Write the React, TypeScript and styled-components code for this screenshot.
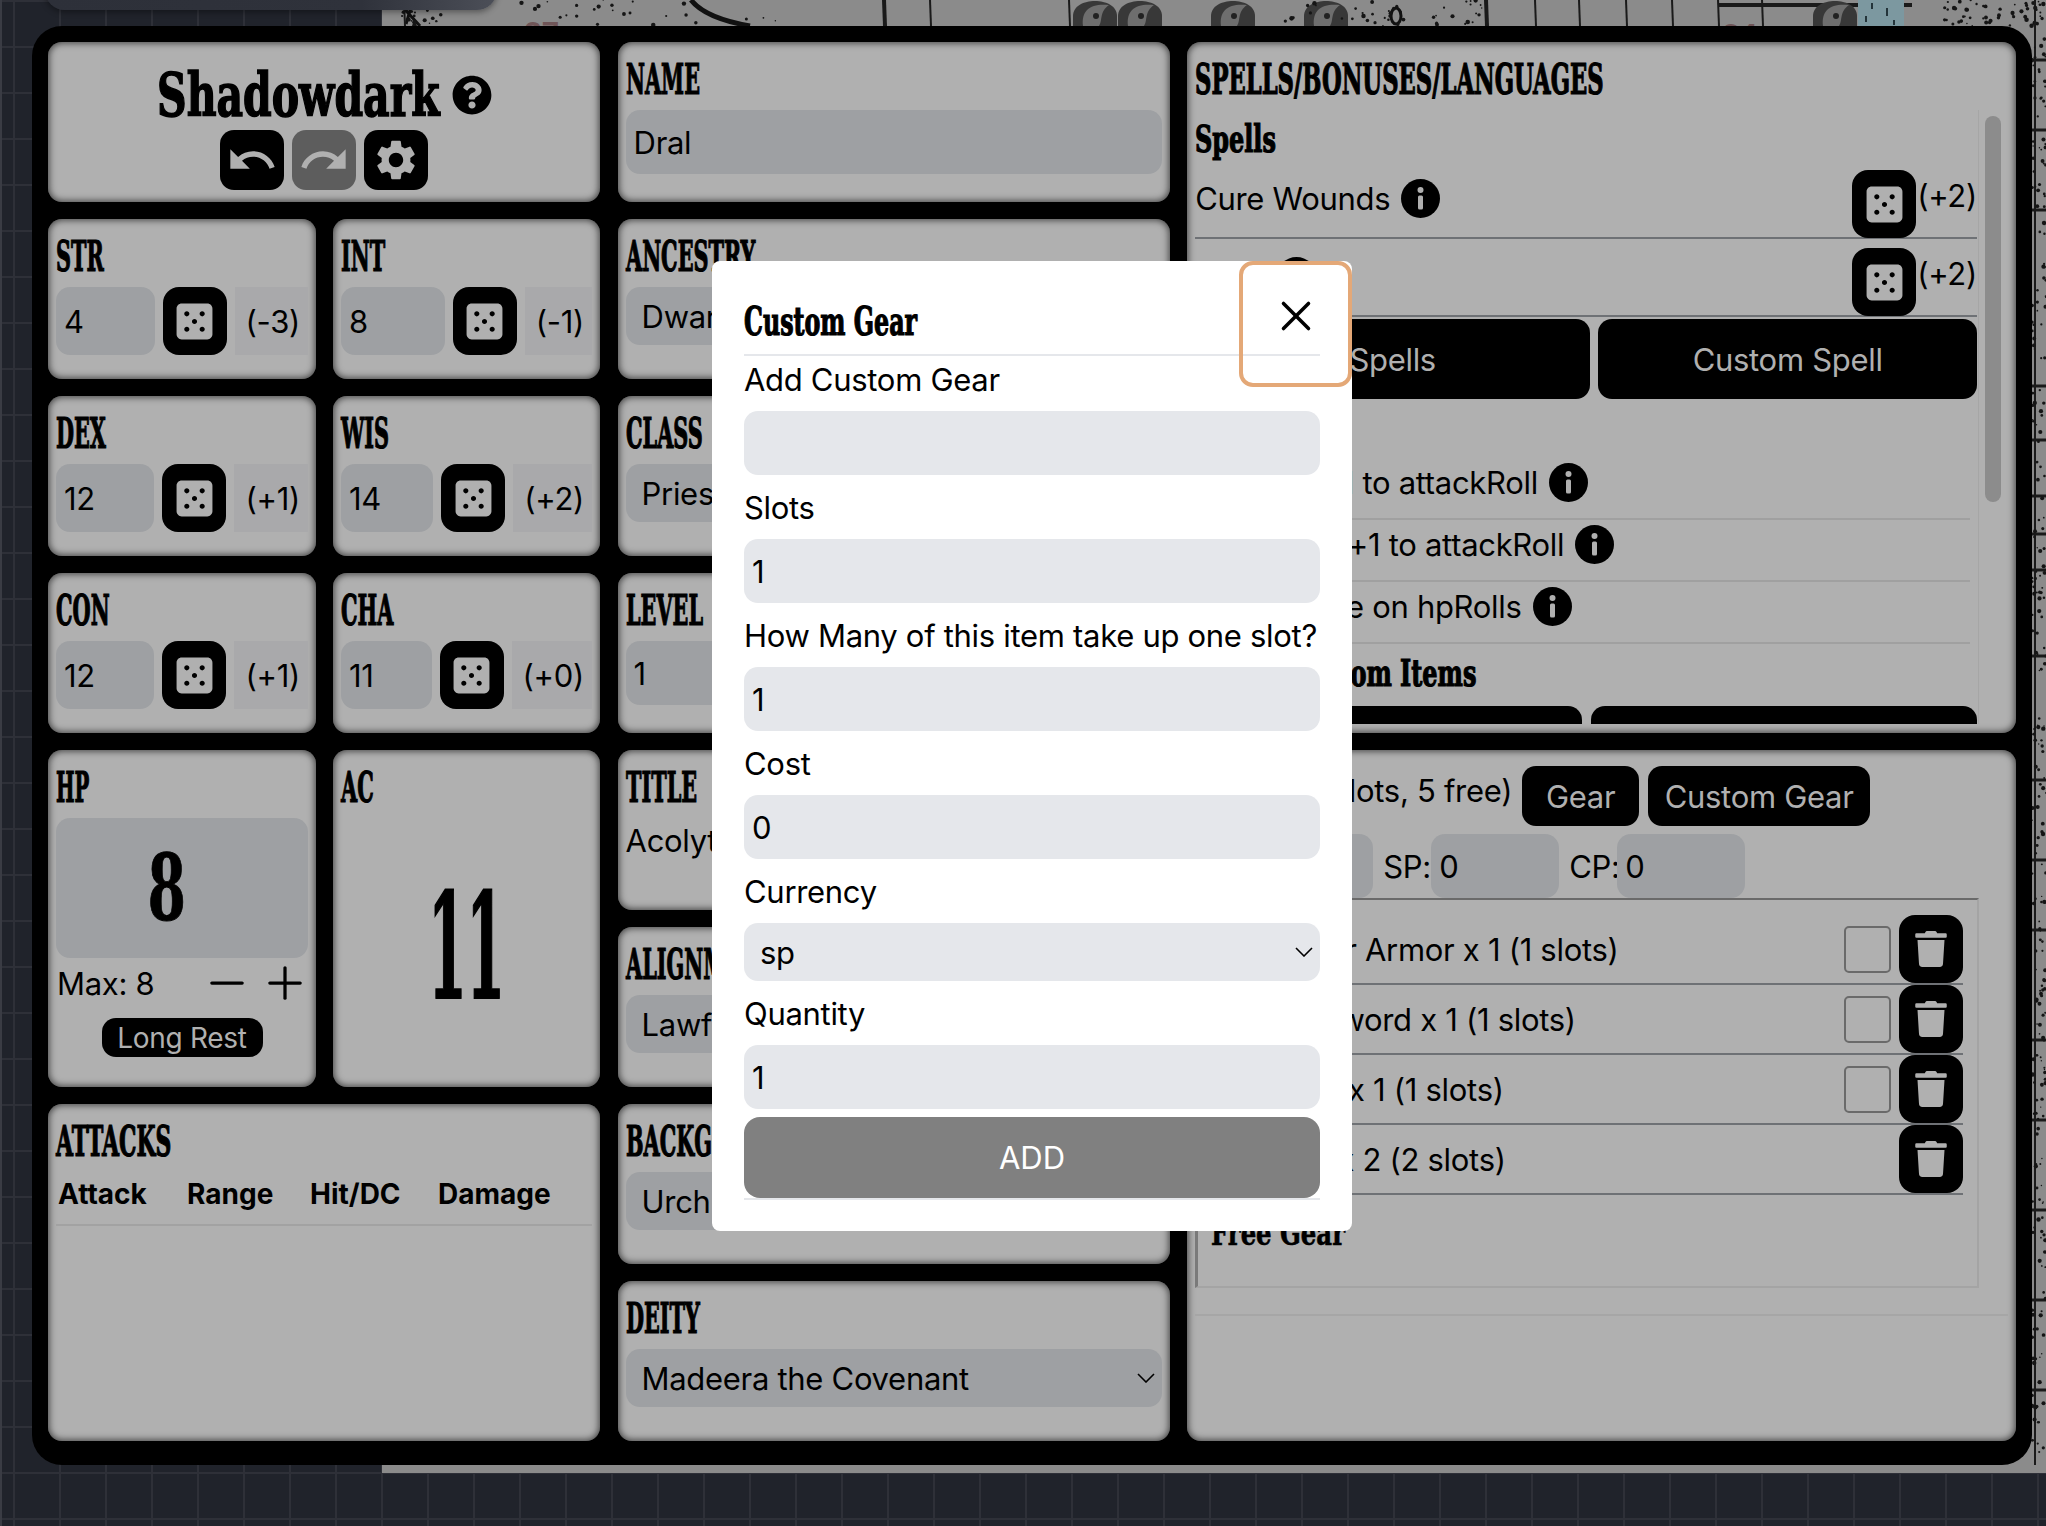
import React from 'react';
import styled, {createGlobalStyle} from 'styled-components';
import {FaDiceFive, FaQuestionCircle, FaTrash} from 'react-icons/fa';
import {MdRedo, MdSettings, MdUndo} from 'react-icons/md';
import {Minus, Plus, X} from 'lucide-react';

const GlobalStyle = createGlobalStyle`
  html, body {
    margin: 0;
    padding: 0;
    background: #20232b;
  }
  * {
    box-sizing: border-box;
  }
  body {
    font-family: Inter, "Liberation Sans", sans-serif;
    font-size: 31px;
    letter-spacing: -0.3px;
    color: #000;
  }
`;

const BLACK = `"DejaVu Serif Condensed", "DejaVu Serif", "Liberation Serif", serif`;

const Page = styled.div`
  position: relative;
  width: 2046px;
  height: 1526px;
  overflow: hidden;
  padding: 26px 14px 0 32px;
  background-color: #20232b;
  background-image:
    linear-gradient(#2e3038 2px, transparent 2px),
    linear-gradient(90deg, #2e3038 2px, transparent 2px);
  background-size: 46px 46px;
  background-position: 13px 0;
  box-shadow: inset 2px 0 0 #3a3c44;
`;

const MapLayer = styled.svg`
  position: absolute;
  left: 382px;
  top: 0;
`;

const TopBar = styled.div`
  position: absolute;
  left: 45px;
  top: -40px;
  width: 452px;
  height: 50px;
  border-radius: 20px;
  background: linear-gradient(90deg, #2d3039 0%, #2f323b 70%, #4c4f58 100%);
  box-shadow: 0 2px 6px rgba(0, 0, 0, 0.4);
`;

const Sheet = styled.div`
  position: relative;
  width: 2000px;
  height: 1439px;
  padding: 16px 16px 24px;
  display: grid;
  grid-template-columns: 2fr 2fr 3fr;
  column-gap: 17px;
  background: #000;
  border-radius: 30px;
`;

const LeftColumn = styled.div`
  display: grid;
  grid-template-columns: 268px 267px;
  grid-template-rows: 160px 160px 160px 160px 337px 337px;
  gap: 17px;
`;

const MiddleColumn = styled.div`
  display: grid;
  grid-template-rows: repeat(8, 160px);
  gap: 17px;
`;

const RightColumn = styled.div`
  display: grid;
  grid-template-rows: 691px 691px;
  gap: 17px;
`;

const Card = styled.section<{$wide?: boolean}>`
  grid-column: ${p => (p.$wide ? '1 / span 2' : 'auto')};
  min-width: 0;
  padding: 8px;
  overflow: hidden;
  background: #b0b0b0;
  border-radius: 14px;
  box-shadow: inset 0 0 7px 1px rgba(0, 0, 0, 0.65);
`;

// no blackletter face on this machine: squeezed heavy serif stands in
const CardTitle = styled.h2<{$squeeze?: number}>`
  margin: 0;
  height: 60px;
  font: 700 42px/60px ${BLACK};
  letter-spacing: 0;
  white-space: nowrap;
  -webkit-text-stroke: 1.2px #000;
  transform: scaleX(${p => p.$squeeze ?? 0.55});
  transform-origin: left center;
`;

const SubHeading = styled.h3<{$height?: number; $indent?: number}>`
  margin: 0;
  height: ${p => p.$height ?? 58}px;
  padding-left: ${p => p.$indent ?? 0}px;
  font: 700 38px/58px ${BLACK};
  letter-spacing: 0;
  white-space: nowrap;
  -webkit-text-stroke: 1.2px #000;
  transform: scaleX(0.7);
  transform-origin: left center;
`;

const HeaderCard = styled(Card)`
  display: flex;
  flex-direction: column;
  align-items: center;
  padding-top: 20px;
`;

const BrandRow = styled.div`
  display: flex;
  align-items: center;
  justify-content: center;
  gap: 11px;
  height: 66px;
`;

const Brand = styled.h1`
  margin: 0;
  width: 284px;
  font: 700 60px/68px ${BLACK};
  letter-spacing: 0;
  white-space: nowrap;
  -webkit-text-stroke: 1.5px #000;
  transform: scaleX(0.76);
  transform-origin: left center;
`;

const ToolRow = styled.div`
  display: flex;
  gap: 8px;
  margin-top: 2px;
`;

const ToolButton = styled.button<{$off?: boolean}>`
  display: flex;
  align-items: center;
  justify-content: center;
  width: 64px;
  height: 60px;
  padding: 0;
  border: none;
  border-radius: 14px;
  color: #b0b0b0;
  background: ${p => (p.$off ? '#5d5d5d' : '#000')};
`;

const StatRow = styled.div`
  display: flex;
  gap: 8px;
  height: 68px;
`;

const Field = styled.input`
  display: block;
  width: 100%;
  min-width: 0;
  height: 64px;
  padding: 0 8px;
  border: none;
  outline: none;
  border-radius: 14px;
  font: inherit;
  letter-spacing: inherit;
  color: #000;
  background: #9ea0a3;
`;

const StatField = styled(Field)`
  flex: 1;
  height: 68px;
`;

const DieButton = styled.button`
  flex: none;
  display: flex;
  align-items: center;
  justify-content: center;
  width: 64px;
  height: 68px;
  padding: 0;
  border: none;
  border-radius: 16px;
  color: #b0b0b0;
  background: #000;
`;

const Modifier = styled.span`
  display: flex;
  align-items: center;
  padding: 0 8px 0 11px;
  background: #a9a9ab;
`;

const SheetSelect = styled.select`
  display: block;
  width: 100%;
  height: 58px;
  padding: 0 16px;
  border: none;
  outline: none;
  appearance: none;
  border-radius: 14px;
  font: inherit;
  letter-spacing: inherit;
  color: #000;
  background: #9ea0a3 url("data:image/svg+xml,%3Csvg xmlns='http://www.w3.org/2000/svg' width='18' height='10' fill='none' stroke='%23000' stroke-width='1.6'%3E%3Cpath d='M1 1l8 8 8-8'/%3E%3C/svg%3E") no-repeat right 7px center;
`;

const PlainValue = styled.div`
  height: 46px;
  line-height: 46px;
`;

const HpValue = styled.div`
  display: flex;
  align-items: center;
  justify-content: center;
  height: 140px;
  padding-right: 30px;
  border-radius: 14px;
  background: #9ea0a3;
`;

const HpDigit = styled.span`
  font: 700 92px/1 ${BLACK};
  -webkit-text-stroke: 1px #000;
  transform: scaleX(0.66);
`;

const HpControls = styled.div`
  display: flex;
  align-items: center;
  gap: 6px;
  height: 50px;
  margin-right: -3px;
  padding-left: 1px;
`;

const HpMax = styled.span`
  flex: 1;
`;

const HpStep = styled.button`
  display: flex;
  padding: 0;
  border: none;
  color: #000;
  background: none;
`;

const LongRest = styled.button`
  display: block;
  width: 161px;
  height: 39px;
  margin: 10px auto 0;
  padding: 0;
  border: none;
  border-radius: 14px;
  font: inherit;
  font-size: 28px;
  letter-spacing: -0.3px;
  color: #b0b0b0;
  background: #000;
`;

const AcValue = styled.div`
  display: flex;
  align-items: center;
  justify-content: center;
  height: 258px;
  font: 700 146px/1 ${BLACK};
  -webkit-text-stroke: 2px #000;
  transform: scaleX(0.42);
`;

const AttackHead = styled.div`
  display: grid;
  grid-template-columns: 129px 123px 128px auto;
  height: 54px;
  padding: 4px 2px 0;
  border-bottom: 2px solid #a2a2a2;
  font-size: 28px;
  font-weight: 700;
  letter-spacing: 0;
  line-height: 36px;
`;

const ScrollArea = styled.div`
  position: relative;
  height: 614px;
  padding-right: 31px;
  overflow: hidden;
`;

const ScrollThumb = styled.span`
  position: absolute;
  top: 6px;
  right: 7px;
  width: 16px;
  height: 386px;
  border-radius: 8px;
  background: #8c8c8c;
`;

const ScrollTrack = styled.span`
  position: absolute;
  top: 0;
  bottom: 0;
  right: 29px;
  width: 1px;
  background: #a6a6a6;
`;

const SpellRow = styled.div<{$tail?: number}>`
  display: flex;
  align-items: flex-start;
  height: 69px;
  margin-bottom: ${p => p.$tail ?? 9}px;
  border-bottom: 2px solid #6e7175;
`;

const SpellName = styled.span`
  display: flex;
  align-items: center;
  gap: 11px;
  flex: 1;
  height: 57px;
`;

const SpellBonus = styled.span`
  margin-left: 1px;
  line-height: 52px;
`;

const ActionPair = styled.div<{$cols?: string; $gap?: number}>`
  display: grid;
  grid-template-columns: ${p => p.$cols ?? '1fr 1fr'};
  gap: ${p => p.$gap ?? 8}px;
`;

const BlackButton = styled.button<{$w?: number; $h?: number}>`
  width: ${p => (p.$w ? `${p.$w}px` : 'auto')};
  height: ${p => p.$h ?? 80}px;
  padding: 0 16px;
  border: none;
  border-radius: 14px;
  font: inherit;
  letter-spacing: inherit;
  color: #b0b0b0;
  background: #000;
`;

const BonusRow = styled.div<{$indent: number}>`
  display: flex;
  align-items: center;
  gap: 11px;
  height: 62px;
  margin-right: 7px;
  padding: 0 0 12px ${p => p.$indent}px;
  border-bottom: 2px solid #a0a0a0;
`;

const GearBar = styled.div`
  display: flex;
  align-items: center;
  gap: 9px;
  height: 60px;
  margin-top: 8px;
`;

const GearLoad = styled.span`
  flex: none;
  display: flex;
  justify-content: flex-end;
  align-self: flex-start;
  width: 317px;
  margin-right: 1px;
  white-space: nowrap;
  line-height: 50px;
`;

const CoinRow = styled.div`
  display: flex;
  align-items: center;
  gap: 10px;
  height: 64px;
  margin-top: 8px;
  padding-left: 2px;
`;

const Coin = styled.label`
  display: flex;
  align-items: center;
`;

const CoinLabel = styled.span`
  width: 48px;
`;

const CoinField = styled(Field)`
  width: 128px;
`;

const GearBox = styled.div`
  height: 418px;
  border-bottom: 2px solid #a6a6a6;
`;

const GearList = styled.div`
  height: 390px;
  margin-right: 29px;
  padding: 15px 14px 0 6px;
  border-style: solid;
  border-width: 2px 2px 2px 3px;
  border-color: #6a6a6a #a4a4a4 #a4a4a4 #7a7a7a;
`;

const GearRow = styled.div`
  display: flex;
  align-items: center;
  height: 70px;
  border-bottom: 2px solid #6e7175;
`;

const GearName = styled.span<{$indent: number}>`
  flex: 1;
  padding-left: ${p => p.$indent}px;
  white-space: nowrap;
`;

const Tick = styled.span`
  width: 47px;
  height: 47px;
  margin-right: 8px;
  border: 2px solid #6a6a6a;
  border-radius: 5px;
`;

const TrashButton = styled.button`
  display: flex;
  align-items: center;
  justify-content: center;
  width: 64px;
  height: 68px;
  padding: 0;
  border: none;
  border-radius: 16px;
  color: #b0b0b0;
  background: #000;
`;

const FreeGear = styled.h3`
  margin: 17px 0 0 7px;
  font: 700 33px/44px ${BLACK};
  letter-spacing: 0;
  -webkit-text-stroke: 0.6px #000;
  transform: scaleX(0.82);
  transform-origin: left center;
`;

const Modal = styled.div`
  position: absolute;
  left: 712px;
  top: 261px;
  width: 640px;
  height: 970px;
  padding: 0 32px;
  border-radius: 8px;
  background: #fff;
`;

const ModalHead = styled.div`
  display: flex;
  align-items: flex-end;
  height: 95px;
  padding-bottom: 8px;
  border-bottom: 2px solid #e5e7eb;
`;

const ModalTitle = styled.h2`
  margin: 0;
  font: 700 40px/50px ${BLACK};
  letter-spacing: 0;
  white-space: nowrap;
  -webkit-text-stroke: 1.2px #000;
  transform: scaleX(0.66);
  transform-origin: left center;
`;

const CloseButton = styled.button`
  position: absolute;
  top: 0;
  right: 0;
  display: flex;
  justify-content: center;
  width: 113px;
  height: 126px;
  padding: 26px 0 0;
  border: 4px solid #e4a877;
  border-radius: 14px;
  color: #000;
  background: none;
`;

const ModalLabel = styled.label<{$first?: boolean}>`
  display: flex;
  align-items: center;
  height: ${p => (p.$first ? 55 : 64)}px;
  padding-bottom: ${p => (p.$first ? 8 : 0)}px;
`;

const ModalField = styled(Field)`
  background: #e5e7eb;
`;

const ModalSelect = styled(SheetSelect)`
  background-color: #e5e7eb;
`;

const AddButton = styled.button`
  display: block;
  width: 100%;
  height: 81px;
  margin-top: 8px;
  border: none;
  border-radius: 16px;
  font: inherit;
  letter-spacing: 0;
  color: #fff;
  background: #808080;
`;

const ModalRule = styled.div`
  height: 2px;
  background: #e5e7eb;
`;

const stats = [
  {name: 'STR', value: 4, mod: '(-3)'},
  {name: 'INT', value: 8, mod: '(-1)'},
  {name: 'DEX', value: 12, mod: '(+1)'},
  {name: 'WIS', value: 14, mod: '(+2)'},
  {name: 'CON', value: 12, mod: '(+1)'},
  {name: 'CHA', value: 11, mod: '(+0)'},
];

const gear = [
  {name: 'Leather Armor x 1 (1 slots)', tick: true, indent: 43},
  {name: 'Longsword x 1 (1 slots)', tick: true, indent: 47},
  {name: 'Shield x 1 (1 slots)', tick: true, indent: 47},
  {name: 'Torch x 2 (2 slots)', tick: false, indent: 43},
];

const bonuses = [
  {name: 'Stout: +1 to attackRoll', indent: 34},
  {name: 'Farsight: +1 to attackRoll', indent: 20},
  {name: 'Advantage on hpRolls', indent: 13},
];

const InfoIcon = () => (
  <svg width="39" height="39" viewBox="0 0 39 39">
    <circle cx="19.5" cy="19.5" r="19.5" fill="#000" />
    <circle cx="19.5" cy="11" r="3" fill="#b0b0b0" />
    <rect x="17" y="16.5" width="5" height="14" rx="1.5" fill="#b0b0b0" />
  </svg>
);

// map that sits behind the sheet, only its edges show
const rand = (() => {
  let seed = 7;
  return () => {
    seed = (seed * 16807) % 2147483647;
    return seed / 2147483647;
  };
})();

const topSpecks = Array.from({length: 150}, () => {
  const zones = [[20, 60], [130, 420], [900, 1110], [1560, 1664]];
  const zone = zones[Math.floor(rand() * zones.length)];
  return {x: zone[0] + rand() * (zone[1] - zone[0]), y: rand() * 26, r: 0.7 + rand() * 1.6};
});

const sideSpecks = Array.from({length: 260}, () => ({
  x: 1650 + rand() * 14,
  y: rand() * 1465,
  r: 0.7 + rand() * 1.5,
}));

const statues = [713, 758, 851, 944, 1453];
const posts = [22, 502, 548, 687, 1104, 1153, 1197, 1244, 1290, 1336, 1380];
const sideLines = [60, 130, 210, 386, 440, 496, 534, 570, 656, 780, 860, 930, 1040, 1120, 1210, 1300, 1390];

const DungeonMap = () => (
  <MapLayer width="1664" height="1473" viewBox="0 0 1664 1473">
    <rect width="1664" height="1473" fill="#8b8b8b" />
    <path d="M16 2 L38 26 M30 4 L24 24" stroke="#111" strokeWidth="3" fill="none" />
    <path d="M309 0 C320 14 345 22 368 26" stroke="#111" strokeWidth="5" fill="none" />
    {posts.map(x => (
      <path key={x} d={`M${x} 0 L${x + 1} 26`} stroke="#1a1a1a" strokeWidth={x === 1104 || x === 502 ? 4 : 2} />
    ))}
    <path d="M1336 5 H1530" stroke="#1a1a1a" strokeWidth="4" />
    <rect x="1476" y="0" width="46" height="26" fill="#7c98a0" />
    <path d="M1490 3 v6 M1505 8 v8 M1484 16 v6 M1512 20 v5" stroke="#24343a" strokeWidth="2" />
    {statues.map(x => (
      <g key={x}>
        <path d={`M${x - 22} 26 V16 C${x - 22} -4 ${x + 22} -4 ${x + 22} 16 V26 Z`} fill="#383838" />
        <path d={`M${x - 12} 26 C${x - 14} 10 ${x - 4} 3 ${x + 14} 5 C${x + 4} 12 ${x + 8} 20 ${x + 4} 26 Z`} fill="#6e6e6e" />
        <circle cx={x + 1} cy={16} r={3} fill="#222" />
      </g>
    ))}
    <ellipse cx="1014" cy="16" rx="5" ry="8" fill="none" stroke="#111" strokeWidth="3" />
    <text x="142" y="44" fontFamily="Liberation Sans" fontWeight="700" fontSize="32" fill="#6f5557">27</text>
    <text x="1340" y="46" fontFamily="Liberation Sans" fontWeight="700" fontSize="32" fill="#6f5557">24</text>
    {topSpecks.map((s, i) => (
      <circle key={i} cx={s.x} cy={s.y} r={s.r} fill="#151515" />
    ))}
    <path d="M1653 0 V1465" stroke="#1a1a1a" strokeWidth="2" />
    {sideLines.map(y => (
      <path key={y} d={`M1650 ${y} H1664`} stroke="#1a1a1a" strokeWidth="3" />
    ))}
    {sideSpecks.map((s, i) => (
      <circle key={i} cx={s.x} cy={s.y} r={s.r} fill="#151515" />
    ))}
  </MapLayer>
);

const App = () => {
  return (
    <Page>
      <GlobalStyle />
      <DungeonMap />
      <TopBar />
      <Sheet>
        <LeftColumn>
          <HeaderCard $wide>
            <BrandRow>
              <Brand>Shadowdark</Brand>
              <FaQuestionCircle size={40} />
            </BrandRow>
            <ToolRow>
              <ToolButton><MdUndo size={52} /></ToolButton>
              <ToolButton $off><MdRedo size={52} /></ToolButton>
              <ToolButton><MdSettings size={48} /></ToolButton>
            </ToolRow>
          </HeaderCard>

          {stats.map(s => (
            <Card key={s.name}>
              <CardTitle>{s.name}</CardTitle>
              <StatRow>
                <StatField readOnly value={s.value} />
                <DieButton><FaDiceFive size={41} /></DieButton>
                <Modifier>{s.mod}</Modifier>
              </StatRow>
            </Card>
          ))}

          <Card>
            <CardTitle $squeeze={0.52}>HP</CardTitle>
            <HpValue><HpDigit>8</HpDigit></HpValue>
            <HpControls>
              <HpMax>Max: 8</HpMax>
              <HpStep><Minus size={52} strokeWidth={1.5} /></HpStep>
              <HpStep><Plus size={52} strokeWidth={1.5} /></HpStep>
            </HpControls>
            <LongRest>Long Rest</LongRest>
          </Card>
          <Card>
            <CardTitle>AC</CardTitle>
            <AcValue>11</AcValue>
          </Card>

          <Card $wide>
            <CardTitle $squeeze={0.58}>ATTACKS</CardTitle>
            <AttackHead>
              <span>Attack</span>
              <span>Range</span>
              <span>Hit/DC</span>
              <span>Damage</span>
            </AttackHead>
          </Card>
        </LeftColumn>

        <MiddleColumn>
          <Card>
            <CardTitle>NAME</CardTitle>
            <Field readOnly value="Dral" />
          </Card>
          <Card>
            <CardTitle>ANCESTRY</CardTitle>
            <SheetSelect defaultValue="Dwarf"><option>Dwarf</option></SheetSelect>
          </Card>
          <Card>
            <CardTitle>CLASS</CardTitle>
            <SheetSelect defaultValue="Priest"><option>Priest</option></SheetSelect>
          </Card>
          <Card>
            <CardTitle>LEVEL</CardTitle>
            <Field readOnly value="1" />
          </Card>
          <Card>
            <CardTitle>TITLE</CardTitle>
            <PlainValue>Acolyte</PlainValue>
          </Card>
          <Card>
            <CardTitle>ALIGNMENT</CardTitle>
            <SheetSelect defaultValue="Lawful"><option>Lawful</option></SheetSelect>
          </Card>
          <Card>
            <CardTitle>BACKGROUND</CardTitle>
            <SheetSelect defaultValue="Urchin"><option>Urchin</option></SheetSelect>
          </Card>
          <Card>
            <CardTitle>DEITY</CardTitle>
            <SheetSelect defaultValue="Madeera the Covenant"><option>Madeera the Covenant</option></SheetSelect>
          </Card>
        </MiddleColumn>

        <RightColumn>
          <Card>
            <CardTitle $squeeze={0.6}>SPELLS/BONUSES/LANGUAGES</CardTitle>
            <ScrollArea>
              <ScrollTrack />
              <ScrollThumb />
              <SubHeading $height={60}>Spells</SubHeading>
              <SpellRow>
                <SpellName>Cure Wounds <InfoIcon /></SpellName>
                <DieButton><FaDiceFive size={41} /></DieButton>
                <SpellBonus>(+2)</SpellBonus>
              </SpellRow>
              <SpellRow $tail={2}>
                <SpellName>Light <InfoIcon /></SpellName>
                <DieButton><FaDiceFive size={41} /></DieButton>
                <SpellBonus>(+2)</SpellBonus>
              </SpellRow>
              <ActionPair $cols="395px 379px">
                <BlackButton>Spells</BlackButton>
                <BlackButton>Custom Spell</BlackButton>
              </ActionPair>
              <SubHeading $height={59}>Bonuses</SubHeading>
              {bonuses.map(b => (
                <BonusRow key={b.name} $indent={b.indent}>{b.name} <InfoIcon /></BonusRow>
              ))}
              <SubHeading $height={62} $indent={135}>Custom Items</SubHeading>
              <ActionPair $gap={9}>
                <BlackButton>Items</BlackButton>
                <BlackButton>Custom Item</BlackButton>
              </ActionPair>
            </ScrollArea>
          </Card>

          <Card>
            <GearBar>
              <GearLoad>Gear (5/10 slots, 5 free)</GearLoad>
              <BlackButton $w={117} $h={60}>Gear</BlackButton>
              <BlackButton $w={222} $h={60}>Custom Gear</BlackButton>
            </GearBar>
            <CoinRow>
              <Coin><CoinLabel>GP:</CoinLabel><CoinField readOnly value="0" /></Coin>
              <Coin><CoinLabel>SP:</CoinLabel><CoinField readOnly value="0" /></Coin>
              <Coin><CoinLabel>CP:</CoinLabel><CoinField readOnly value="0" /></Coin>
            </CoinRow>
            <GearBox>
              <GearList>
                {gear.map(g => (
                  <GearRow key={g.name}>
                    <GearName $indent={g.indent}>{g.name}</GearName>
                    {g.tick && <Tick />}
                    <TrashButton><FaTrash size={36} /></TrashButton>
                  </GearRow>
                ))}
                <FreeGear>Free Gear</FreeGear>
              </GearList>
            </GearBox>
          </Card>
        </RightColumn>
      </Sheet>

      <Modal>
        <ModalHead>
          <ModalTitle>Custom Gear</ModalTitle>
        </ModalHead>
        <CloseButton><X size={50} strokeWidth={1.7} /></CloseButton>
        <ModalLabel $first>Add Custom Gear</ModalLabel>
        <ModalField readOnly value="" />
        <ModalLabel>Slots</ModalLabel>
        <ModalField readOnly value="1" />
        <ModalLabel>How Many of this item take up one slot?</ModalLabel>
        <ModalField readOnly value="1" />
        <ModalLabel>Cost</ModalLabel>
        <ModalField readOnly value="0" />
        <ModalLabel>Currency</ModalLabel>
        <ModalSelect defaultValue="sp"><option>sp</option></ModalSelect>
        <ModalLabel>Quantity</ModalLabel>
        <ModalField readOnly value="1" />
        <AddButton>ADD</AddButton>
        <ModalRule />
      </Modal>
    </Page>
  );
};

export default App;
